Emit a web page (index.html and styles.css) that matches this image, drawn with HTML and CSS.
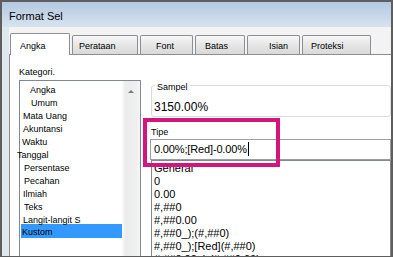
FILE: index.html
```html
<!DOCTYPE html>
<html lang="id">
<head>
    <meta charset="UTF-8">
    <meta name="viewport" content="width=device-width, initial-scale=1.0">
    <title>Format Sel</title>
    <link rel="stylesheet" href="styles.css">
</head>
<body>
    <div class="screen">
        <div class="titlebar">Format Sel</div>
        <div class="frame">
            <div class="face">
                <nav class="tabs">
                    <div class="tab active tab-angka">Angka</div>
                    <div class="tab tab-perataan">Perataan</div>
                    <div class="tab tab-font">Font</div>
                    <div class="tab tab-batas">Batas</div>
                    <div class="tab tab-isian">Isian</div>
                    <div class="tab tab-proteksi">Proteksi</div>
                </nav>
                <section class="panel">
                    <div class="left">
                        <div class="label">Kategori.</div>
                        <div class="catlist">
                            <ul class="items">
                                <li class="ind-10">Angka</li>
                                <li class="ind-11">Umum</li>
                                <li class="ind-3">Mata Uang</li>
                                <li class="ind-3">Akuntansi</li>
                                <li class="ind-2">Waktu</li>
                                <li class="ind-out">Tanggal</li>
                                <li class="ind-4">Persentase</li>
                                <li class="ind-4">Pecahan</li>
                                <li class="ind-3">Ilmiah</li>
                                <li class="ind-4">Teks</li>
                                <li class="ind-3">Langit-langit S</li>
                                <li class="selected">Kustom</li>
                            </ul>
                            <div class="scrollbar"><span class="arrow-up"></span></div>
                        </div>
                    </div>
                    <div class="right">
                        <fieldset class="sample">
                            <legend>Sampel</legend>
                            <div class="sample-value">3150.00%</div>
                        </fieldset>
                        <div class="type-label">Tipe</div>
                        <div class="type-input">0.00%;[Red]-0.00%<span class="caret"></span></div>
                        <ul class="formats">
                            <li>General</li>
                            <li>0</li>
                            <li>0.00</li>
                            <li>#,##0</li>
                            <li>#,##0.00</li>
                            <li>#,##0_);(#,##0)</li>
                            <li>#,##0_);[Red](#,##0)</li>
                            <li>#,##0.00_);(#,##0.00)</li>
                        </ul>
                        <div class="highlight"></div>
                    </div>
                </section>
            </div>
        </div>
    </div>
</body>
</html>
```

FILE: styles.css
```css
body {
    margin: 0;
    font-family: "Liberation Sans", Arial, sans-serif;
    color: #000;
    background: #fff;
}

.screen {
    width: 393px;
    height: 257px;
    box-sizing: border-box;
    border: 2px solid #5e5e5e;
    border-bottom-width: 1px;
    overflow: hidden;
    background: #dfe7ef;
}

.titlebar {
    height: 25px;
    box-sizing: border-box;
    padding: 3px 0 0 7px;
    line-height: 22px;
    font-size: 11px;
    background: linear-gradient(#b3c8e1, #d8e3ef);
}

.frame {
    padding-left: 7px;
    height: 230px;
}

.face {
    background: #f3f3f3;
    padding-top: 6px;
    height: 100%;
}

/* tab strip */
.tabs {
    display: flex;
    gap: 2px;
    height: 21px;
    align-items: flex-end;
    padding-left: 1px;
}

.tab {
    height: 19px;
    box-sizing: border-box;
    border: 1px solid #8c8e94;
    border-bottom: none;
    border-radius: 2px 2px 0 0;
    padding-top: 4px;
    font-size: 9px;
    line-height: 13px;
    background: linear-gradient(#f7f7f7, #e6e6e6 50%, #d9d9d9);
}

.tab.active {
    height: 22px;
    margin-bottom: -1px;
    padding-top: 6px;
    background: #fff;
    position: relative;
    z-index: 1;
}

.tab-angka { width: 60px; padding-left: 9px; }
.tab-perataan { width: 66px; padding-left: 6px; }
.tab-font { width: 53px; padding-left: 15px; }
.tab-batas { width: 50px; padding-left: 9px; }
.tab-isian { width: 53px; padding-left: 21px; }
.tab-proteksi { width: 69px; padding-left: 8px; }

.panel {
    display: flex;
    background: #fff;
    border-top: 1px solid #8c8e94;
    border-left: 1px solid #8c8e94;
    height: 220px;
}

/* category list */
.left {
    padding-left: 9px;
}

.label {
    margin-top: 11px;
    font-size: 9px;
    line-height: 13px;
}

.catlist {
    display: flex;
    width: 122px;
    height: 200px;
    box-sizing: border-box;
    margin-top: 1px;
    border: 1px solid #828790;
}

.items {
    list-style: none;
    margin: 0;
    padding: 3px 0 0;
    width: 102px;
    font-size: 9px;
    line-height: 13px;
}

.ind-2 { padding-left: 2px; }
.ind-3 { padding-left: 3px; }
.ind-4 { padding-left: 4px; }
.ind-10 { padding-left: 10px; }
.ind-11 { padding-left: 11px; }
.ind-out { margin-left: -3px; }

.items .selected {
    height: 14px;
    box-sizing: border-box;
    margin: -3px 0 0 1px;
    padding: 2px 0 0 1px;
    line-height: 12px;
    background: #3399ff;
}

.scrollbar {
    width: 18px;
    background: linear-gradient(to right, #fafafa, #ececec 20%, #efefef 80%, #f5f5f5);
    display: flex;
    justify-content: center;
}

.arrow-up {
    width: 0;
    height: 0;
    margin-top: 9px;
    border-left: 3px solid transparent;
    border-right: 3px solid transparent;
    border-bottom: 3px solid #7a7a7a;
}

/* format side */
.right {
    position: relative;
    margin-left: 10px;
    width: 300px;
}

.sample {
    margin: 22px 0 0;
    padding: 7px 0 2px 2px;
    border: 1px solid #d5dfe5;
    border-radius: 3px;
    min-width: 0;
}

.sample legend {
    margin-left: 1px;
    padding: 5px 2px 0;
    font-size: 9px;
    line-height: 11px;
}

.sample-value {
    font-size: 12px;
    line-height: 14px;
}

.type-label {
    margin-top: 10px;
    font-size: 9px;
    line-height: 11px;
}

.type-input {
    margin: 1px 0 0 -1px;
    height: 21px;
    box-sizing: border-box;
    border: 1px solid #9a9da4;
    padding-left: 3px;
    font-size: 11px;
    line-height: 19px;
    letter-spacing: -0.15px;
}

.caret {
    display: inline-block;
    width: 1px;
    height: 14px;
    margin-left: 1px;
    vertical-align: -3px;
    background: #000;
}

.formats {
    list-style: none;
    margin: 0;
    padding: 1px 0 0 2px;
    height: 120px;
    border: 1px solid #828790;
    font-size: 11px;
    line-height: 13px;
}

.highlight {
    position: absolute;
    left: -8px;
    top: 63px;
    width: 137px;
    height: 49px;
    box-sizing: border-box;
    border: 4px solid #d4157e;
}
```
